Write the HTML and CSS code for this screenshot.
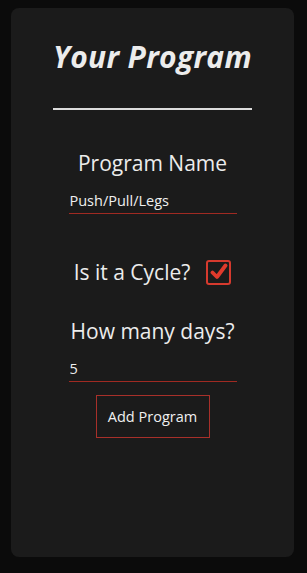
FILE: index.html
```html
<!doctype html>
<html>
<head>
<meta charset="utf-8">
<title>Your Program</title>
<link rel="stylesheet" href="styles.css">
</head>
<body>
	<div class="card">
		<h1 class="title">Your Program</h1>
		<hr class="divider">

		<form class="program-form">
			<label class="field-label" for="name">Program Name</label>
			<input class="line-input" type="text" id="name" value="Push/Pull/Legs">

			<div class="cycle-row">
				<span class="field-label">Is it a Cycle?</span>
				<span class="check-box">
					<svg width="18" height="18" viewBox="0 0 18 18">
						<path d="M2.5 9.5 L7 14 L15.5 2.5" fill="none" stroke="#e03a2c" stroke-width="3.8" stroke-linecap="round" stroke-linejoin="round"/>
					</svg>
				</span>
			</div>

			<label class="field-label" for="days">How many days?</label>
			<input class="line-input" type="text" id="days" value="5">

			<button type="button" class="add-btn">Add Program</button>
		</form>
	</div>
</body>
</html>
```

FILE: styles.css
```css
html, body {
    margin: 0;
    padding: 0;
    background-color: #0b0b0b;
}

body {
    padding: 8px 13px 16px 11px;
    font-family: "Open Sans", "DejaVu Sans", sans-serif;
    color: #ececec;
}

.card {
    background-color: #1b1b1b;
    border-radius: 8px;
    height: 549px;
    box-sizing: border-box;
    padding-top: 31px;
    display: flex;
    flex-direction: column;
    align-items: center;
}

.title {
    margin: 0;
    font-size: 30px;
    font-weight: 700;
    font-style: italic;
    line-height: 36px;
    letter-spacing: 0.3px;
}

.divider {
    width: 199px;
    height: 0;
    margin: 33px 0 0 0;
    border: none;
    border-top: 2px solid #dcdcdc;
}

.program-form {
    display: flex;
    flex-direction: column;
    align-items: center;
    margin-top: 39px;
}

.field-label {
    font-size: 21px;
    line-height: 28px;
}

.line-input {
    box-sizing: border-box;
    width: 168px;
    height: 22px;
    margin-top: 15px;
    padding: 0 0 4px 1px;
    background: transparent;
    border: none;
    border-bottom: 1px solid #a02a22;
    color: #f0f0f0;
    font-family: "Open Sans", "DejaVu Sans", sans-serif;
    font-size: 14.5px;
    line-height: 17px;
    outline: none;
}

.cycle-row {
    display: flex;
    align-items: center;
    gap: 16px;
    margin: 44px 0 31px 0;
}

.check-box {
    width: 21px;
    height: 21px;
    border: 2px solid #d63a2e;
    border-radius: 3px;
    display: flex;
    align-items: center;
    justify-content: center;
}

.add-btn {
    margin-top: 13px;
    width: 114px;
    height: 43px;
    background: transparent;
    border: 1px solid #a8302a;
    color: #f0f0f0;
    font-family: "Open Sans", "DejaVu Sans", sans-serif;
    font-size: 14.5px;
}
```
